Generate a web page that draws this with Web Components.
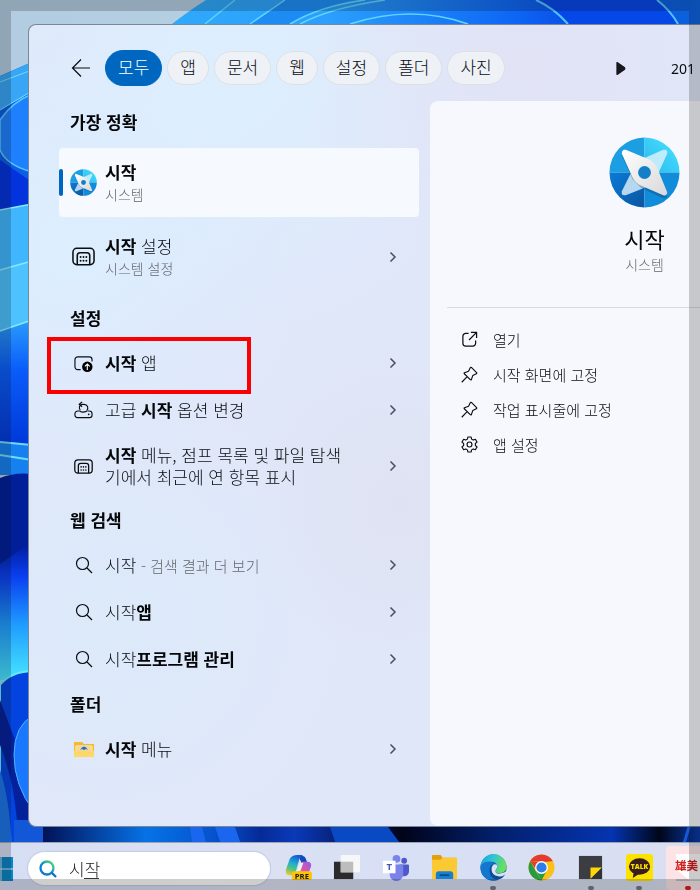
<!DOCTYPE html>
<html lang="ko">
<head>
<meta charset="utf-8">
<meta name="viewport" content="width=device-width, initial-scale=1">
<title>시작 - 검색</title>
<style>
  html, body {
    margin: 0;
    height: 100%;
    overflow: hidden;
  }
  body {
    font-family: "Noto Sans CJK KR", "Noto Sans", sans-serif;
    font-weight: 300;
    font-size: 17px;
    line-height: 22px;
    color: #0a0c10;
  }
</style>
</head>
<body>
<search-desktop>
  <search-window>
    <filter-bar slot="header">
      <filter-pill selected>모두</filter-pill>
      <filter-pill>앱</filter-pill>
      <filter-pill>문서</filter-pill>
      <filter-pill>웹</filter-pill>
      <filter-pill>설정</filter-pill>
      <filter-pill>폴더</filter-pill>
      <filter-pill>사진</filter-pill>
      <span slot="points">201</span>
    </filter-bar>

    <result-group slot="results" label="가장 정확" large>
      <result-row icon="start" size="27" active>
        <b>시작</b>
        <span slot="sub">시스템</span>
      </result-row>
      <result-row icon="taskbar" size="23" more>
        <b>시작</b> 설정
        <span slot="sub">시스템 설정</span>
      </result-row>
    </result-group>

    <result-group slot="results" label="설정">
      <result-row icon="startup" size="19" more marked><b>시작</b> 앱</result-row>
      <result-row icon="recovery" size="19" more>고급 <b>시작</b> 옵션 변경</result-row>
      <result-row icon="taskbar" size="19" more><b>시작</b> 메뉴, 점프 목록 및 파일 탐색<wbr>기에서 최근에 연 항목 표시</result-row>
    </result-group>

    <result-group slot="results" label="웹 검색">
      <result-row icon="search" size="18" more>시작 <small>- 검색 결과 더 보기</small></result-row>
      <result-row icon="search" size="18" more>시작<b>앱</b></result-row>
      <result-row icon="search" size="18" more>시작<b>프로그램 관리</b></result-row>
    </result-group>

    <result-group slot="results" label="폴더">
      <result-row icon="folder-small" size="20" more><b>시작</b> 메뉴</result-row>
    </result-group>

    <detail-pane slot="detail" name="시작" kind="시스템">
      <detail-action icon="open">열기</detail-action>
      <detail-action icon="pin">시작 화면에 고정</detail-action>
      <detail-action icon="pin">작업 표시줄에 고정</detail-action>
      <detail-action icon="gear">앱 설정</detail-action>
    </detail-pane>
  </search-window>

  <task-bar slot="taskbar" query="시작">
    <task-app icon="copilot" label="Copilot"></task-app>
    <task-app icon="taskview" label="작업 보기"></task-app>
    <task-app icon="teams" label="Teams"></task-app>
    <task-app icon="explorer" label="파일 탐색기"></task-app>
    <task-app icon="edge" label="Edge" open></task-app>
    <task-app icon="chrome" label="Chrome"></task-app>
    <task-app icon="notes" label="스티커 메모" open></task-app>
    <task-app icon="talk" label="카카오톡" open></task-app>
    <task-app icon="brush" label="캡처" alert></task-app>
  </task-bar>
</search-desktop>

<script>
const ICONS = {
  start: `<svg viewBox="0 0 72 72">
    <defs>
      <linearGradient id="q1" x1="0" y1="1" x2="1" y2="0"><stop offset="0" stop-color="#27b9ee"/><stop offset="1" stop-color="#4de3ff"/></linearGradient>
      <linearGradient id="q3" x1="0" y1="0" x2="1" y2="1"><stop offset="0" stop-color="#0a7bd8"/><stop offset="1" stop-color="#0a559f"/></linearGradient>
      <linearGradient id="bl" x1="0" y1="0" x2="1" y2="1"><stop offset="0" stop-color="#fff"/><stop offset="1" stop-color="#d8d8da"/></linearGradient>
      <clipPath id="c"><circle cx="36" cy="36" r="35.500"/></clipPath>
    </defs>
    <g clip-path="url(#c)">
      <path d="M0 0h36v36H0z" fill="#1b9fe2"/><path d="M36 0h36v36H36z" fill="url(#q1)"/>
      <path d="M0 36h36v36H0z" fill="url(#q3)"/><path d="M36 36h36v36H36z" fill="#108cdb"/>
    </g>
    <path d="M55 13q5-1 4 4L49 39 40 50 17 59q-5 1-4-4L24 33 32 23z" fill="#e0f4fd" opacity=".8"/>
    <path d="M17 15 38 23 48 32 59 57q0 4-4 3L33 50 24 41 13 17q0-4 4-2z" transform="translate(0 2)" fill="#06365f" opacity=".3"/>
    <path d="M17 13 39 22Q47 25 50 34L59 56q0 4-4 3L34 50Q26 47 23 39L13 17q0-5 4-4z" fill="url(#bl)"/>
    <circle cx="36" cy="36" r="6.500" fill="#147fc9"/>
  </svg>`,
  taskbar: `<svg viewBox="0 0 24 24" fill="none" stroke="currentColor" stroke-width="1.600">
    <rect x="1" y="3.500" width="22" height="17" rx="4"/><path d="M5.500 20.500V11a3 3 0 0 1 3-3h7a3 3 0 0 1 3 3v9.500"/>
    <g fill="currentColor" stroke="none"><circle cx="9" cy="12.500" r="1"/><circle cx="12" cy="12.500" r="1"/><circle cx="15" cy="12.500" r="1"/><circle cx="9" cy="16.500" r="1"/><circle cx="12" cy="16.500" r="1"/><circle cx="15" cy="16.500" r="1"/></g>
  </svg>`,
  startup: `<svg viewBox="0 0 20 20" fill="none" stroke="currentColor" stroke-width="1.200">
    <path d="M7 16.500H4a3 3 0 0 1-3-3V6a3 3 0 0 1 3-3h12a3 3 0 0 1 3 3v2"/>
    <circle cx="14" cy="13.500" r="5.500" fill="#000" stroke="none"/><path d="M14 16.800v-6M11.500 13l2.500-2.500 2.500 2.500" stroke="#fff"/>
  </svg>`,
  recovery: `<svg viewBox="0 0 20 20" fill="none" stroke="currentColor" stroke-width="1.200">
    <path d="M6 10.500H4a3 3 0 0 0-3 3V15a2.500 2.500 0 0 0 2.500 2.500h13A2.500 2.500 0 0 0 19 15v-1.500a3 3 0 0 0-3-3h-1.500M6 10.500q2 2.500 8 0M6.500 9.500C4.500 7 6 3.500 9 3.500h1.500c4 0 5 4 3 6.500M8.500 1 5.500 3.500l3 2.500"/>
    <circle cx="15.500" cy="14" r=".9" fill="currentColor" stroke="none"/>
  </svg>`,
  search: `<svg viewBox="0 0 18 18" fill="none" stroke="currentColor" stroke-width="1.200"><circle cx="7.500" cy="7.500" r="6"/><path d="m12 12 5 5"/></svg>`,
  'folder-small': `<svg viewBox="0 0 20 20">
    <path d="M0 3h8l2 2h10v12H0z" fill="#f5b92a"/><path d="M2 6h16v6H2z" fill="#e6d9b4"/>
    <path d="M0 12h7q3-3 6 0h7v6H0z" fill="#ffd766"/><path d="M1 7h5v6H1zM14 7h5v6h-5z" fill="#fcd88a"/>
    <path d="M6 11q4-7 8 0l-2-1-2 1-2-1z" fill="#1a73c7"/>
  </svg>`,
  open: `<svg viewBox="0 0 18 18" fill="none" stroke="currentColor" stroke-width="1.300"><path d="M8 2.500H5A3 3 0 0 0 2 5.500V13a3 3 0 0 0 3 3h7.500a3 3 0 0 0 3-3v-3M10.500 1.500h6v6M16.500 1.500 8.500 9.500"/></svg>`,
  pin: `<svg viewBox="0 0 18 18" fill="none" stroke="currentColor" stroke-width="1.200" stroke-linejoin="round"><path d="m11 1.500 5.500 5.500q.5.800-.3 1.200L12.500 10 11 14.500q-.5.700-1.200 0L3.500 8.200q-.6-.7.200-1.100L8 5.500l1.800-3.700q.5-.8 1.200-.3zM6.500 11.300.8 17.200"/></svg>`,
  gear: `<svg viewBox="0 0 18 18" fill="none" stroke="currentColor" stroke-width="1.200" stroke-linejoin="round">
    <path d="M7.300 1h3.400l.5 2.300 1.700 1 2.300-.8L17 6.500 15.200 8v2L17 11.500l-1.800 3-2.300-.8-1.700 1-.5 2.300H7.300l-.5-2.300-1.700-1-2.300.8-1.800-3L2.800 10V8L1 6.500l1.800-3 2.300.8 1.700-1z"/><circle cx="9" cy="9" r="2.600"/>
  </svg>`,
  chevron: `<svg viewBox="0 0 10 12" fill="none" stroke="#4c5058" stroke-width="1.500"><path d="m2.500 1.500 4.500 4.500-4.500 4.500"/></svg>`,
  back: `<svg viewBox="0 0 20 20" fill="none" stroke="currentColor" stroke-width="1.200"><path d="M19 10H1.500M10 1.500 1.500 10l8.500 8.500"/></svg>`,
  bing: `<svg viewBox="0 0 18 18" fill="none" stroke-width="2.300">
    <defs><linearGradient id="g" x1="0" y1="1" x2="1" y2="0"><stop offset=".3" stop-color="#0f7bd0"/><stop offset=".6" stop-color="#16a6b8"/><stop offset="1" stop-color="#6adf6a"/></linearGradient></defs>
    <circle cx="8" cy="8" r="6.500" stroke="url(#g)"/><path d="m12.500 12.500 4.500 4.500" stroke="#0f6fc6"/>
  </svg>`,
  windows: `<svg viewBox="0 0 24 24" fill="#0b84c4"><path d="M0 0h11.500v11.500H0zM12.500 0H24v11.500H12.500zM0 12.500h11.500V24H0zM12.500 12.500H24V24H12.500z"/></svg>`,
  copilot: `<svg viewBox="0 0 28 28">
    <defs>
      <linearGradient id="a" x1=".6" y1="0" x2=".3" y2="1"><stop offset="0" stop-color="#1456d8"/><stop offset=".45" stop-color="#1fb3cf"/><stop offset=".7" stop-color="#55c27a"/><stop offset="1" stop-color="#e8c93a"/></linearGradient>
      <linearGradient id="b" x1="0" y1="1" x2="1" y2="0"><stop offset="0" stop-color="#ff8d55"/><stop offset=".5" stop-color="#e0569d"/><stop offset="1" stop-color="#8f5cf4"/></linearGradient>
    </defs>
    <path d="M14 2h4q3 0 4 4l1 3h-6z" fill="#1149b8"/>
    <path d="M18 8h5q5 0 4 5l-3 8q-1 3-5 3H9q3 0 4-3l3-10q1-3 2-3z" fill="url(#b)"/>
    <path d="M8 2q2-1 5-1h6q-3 1-4 4l-4 14q-1 3-4 3H4q-4 0-3-6L5 5q1-2 3-3z" fill="url(#a)"/>
    <path d="M16 9h3l-3 9h-4z" fill="#eaf0fa"/>
    <rect x="7" y="18" width="21" height="9" rx="3" fill="#f9c60c"/>
    <text x="17.500" y="25.500" font-family="Open Sans" font-size="8" font-weight="700" text-anchor="middle" fill="#241a00">PRE</text>
  </svg>`,
  taskview: `<svg viewBox="0 0 28 28"><path d="M1 8h20v18H1z" fill="#2b2b2b"/><path d="M8 1h20v18H8z" fill="#f7f7f7"/><path d="M8 8h13v11H8z" fill="#bdbdbd"/></svg>`,
  teams: `<svg viewBox="0 0 28 28">
    <circle cx="23" cy="7" r="3" fill="#5059c9"/><path d="M18 11h9q1 0 1 1v6a5 5 0 0 1-9 3z" fill="#5059c9"/>
    <circle cx="15" cy="5" r="4" fill="#7b83eb"/><path d="M8 11h14v9a7 7 0 0 1-14 2z" fill="#7b83eb"/>
    <rect x="1" y="7" width="13" height="13" fill="#fff"/><text x="7.500" y="17" font-family="Open Sans" font-size="10" font-weight="700" text-anchor="middle" fill="#4b53bc">T</text>
  </svg>`,
  explorer: `<svg viewBox="0 0 28 28"><path d="M1 2q0-1 1-1h8l2 3h13q2 0 2 2v5H1z" fill="#e3a008"/><path d="M1 6h9l2-2h15v22H1z" fill="#fbc934"/><path d="M5 26v-5q0-3 3-3h12q3 0 3 3v5z" fill="#1681d2"/><path d="M9 22h10" stroke="#0a4e8d" stroke-width="2"/></svg>`,
  edge: `<svg viewBox="0 0 28 28">
    <defs><linearGradient id="e" x1="0" y1="0" x2="1" y2=".3"><stop offset="0" stop-color="#1b9de2"/><stop offset=".5" stop-color="#2fc4d6"/><stop offset="1" stop-color="#6ade5d"/></linearGradient></defs>
    <circle cx="14" cy="14" r="13.500" fill="#0f5bb0"/>
    <path d="M.5 14A13.500 13.500 0 0 1 27.500 13c0 5-4 7-7.500 7-3 0-4-1-4-2 0-2 2-2 2-5 0-3-3-5-7-5C6 8 1 10 .5 14z" fill="url(#e)"/>
    <path d="M.5 14C1 10 5 8 9 8q4 0 6 2-5 1-5 7c0 5 4 9 9 10C9 30 .5 24 .5 14z" fill="#1476cf"/>
    <path d="M14 10q-4 3-2 8 3 5 9 5 3 0 5-2-2 4-6 5-10 1-10-9 0-5 4-7z" fill="#0c4a93"/>
    <path d="M14 11q4-1 4 2c0 2-2 3-2 5 0 2 3 3 6 2 2 0 4-1 5-2l1 1-2 2q-3 3-7 2-7-1-7-7 0-3 2-5z" fill="#dbe2f4"/>
  </svg>`,
  chrome: `<svg viewBox="0 0 28 28"><circle cx="14" cy="14" r="13.500" fill="#fbc116"/>
    <path d="M2.300 7.300A13.500 13.500 0 0 1 25.700 7.300L14 8z" fill="#e33b2e"/><path d="M2.300 7.300 8 18l6 9.500A13.500 13.500 0 0 1 2.300 7.300z" fill="#259b45"/>
    <path d="M2.300 7.300 9 8h17l-12-1-6 9z" fill="#e33b2e"/><path d="m8 17 6 3 5-2-5 9.500z" fill="#259b45"/>
    <circle cx="14" cy="14" r="6.700" fill="#fff"/><circle cx="14" cy="14" r="5.300" fill="#2f7de9"/></svg>`,
  notes: `<svg viewBox="0 0 28 28"><path d="M2 2h24v24H2z" fill="#3b3d40"/><path d="M14 26V14h12z" fill="#ffd60a"/><path d="M14 26h12V14z" fill="#303235"/></svg>`,
  talk: `<svg viewBox="0 0 28 28"><rect width="28" height="28" rx="3" fill="#fbe300"/><ellipse cx="14" cy="13" rx="11" ry="8.500" fill="#3a1d1d"/><path d="m8 19-1 6 6-4z" fill="#3a1d1d"/>
    <text x="14" y="15.500" font-family="Open Sans" font-size="7" font-weight="800" text-anchor="middle" fill="#fbe300">TALK</text></svg>`,
  brush: `<svg viewBox="0 0 28 28"><path d="M1 0h27v28H16L1 16z" fill="#fdfdfd"/><path d="M1 27h27" stroke="#8b98a8"/>
    <text x="0" y="17" font-family="Noto Sans CJK KR" font-size="12" font-weight="700" fill="#d0201c">雄美</text></svg>`
};

class FluentIcon extends HTMLElement {
  constructor() {
    super();
    this.attachShadow({ mode: 'open' });
  }

  connectedCallback() {
    const size = this.getAttribute('size') || 18;
    this.shadowRoot.innerHTML = `
      <style>
        :host { display: inline-flex; flex: none; width: ${size}px; height: ${size}px; }
        svg { width: 100%; height: 100%; overflow: visible; }
      </style>
      ${ICONS[this.getAttribute('name')]}
    `;
  }
}
customElements.define('fluent-icon', FluentIcon);

class DesktopWallpaper extends HTMLElement {
  constructor() {
    super();
    this.attachShadow({ mode: 'open' });
    this.shadowRoot.innerHTML = `
      <style>
        :host { position: fixed; inset: 0; z-index: -1; }
        svg { display: block; width: 100%; height: 100%; }
      </style>
      <svg viewBox="0 0 700 890" preserveAspectRatio="none">
        <defs>
          <linearGradient id="sky" x1="0" y1="0" x2="1" y2="0"><stop offset="0" stop-color="#b2cde2"/><stop offset="1" stop-color="#b8cfe0"/></linearGradient>
          <linearGradient id="top" x1="0" y1="0" x2="1" y2="0"><stop offset="0" stop-color="#2fa9fb"/><stop offset=".3" stop-color="#2a9ffc"/><stop offset=".65" stop-color="#0d66f5"/><stop offset=".75" stop-color="#0a50e8"/><stop offset="1" stop-color="#0c62dc"/></linearGradient>
          <linearGradient id="mid" x1="0" y1="0" x2="0" y2="1"><stop offset="0" stop-color="#2a9cfb"/><stop offset=".4" stop-color="#0a5cfa"/><stop offset="1" stop-color="#0038d8"/></linearGradient>
          <linearGradient id="deep" x1="0" y1="0" x2="0" y2="1"><stop offset="0" stop-color="#001a98"/><stop offset=".25" stop-color="#0a3ff0"/><stop offset=".6" stop-color="#1f9cff"/><stop offset="1" stop-color="#48e6ff"/></linearGradient>
          <linearGradient id="bot" x1="0" y1="0" x2="1" y2="0"><stop offset=".02" stop-color="#020c50"/><stop offset=".18" stop-color="#0672e6"/><stop offset=".28" stop-color="#0553cc"/><stop offset=".35" stop-color="#062a98"/><stop offset=".4" stop-color="#0a3ab8"/><stop offset=".48" stop-color="#061a6a"/><stop offset=".56" stop-color="#01041a"/><stop offset=".7" stop-color="#03206e"/><stop offset=".87" stop-color="#0434b0"/><stop offset=".94" stop-color="#010618"/><stop offset="1" stop-color="#0838a8"/></linearGradient>
        </defs>
        <path d="M0 0h700v890H0z" fill="url(#sky)"/>
        <path d="M172 24Q190 10 206 0H700V40H172z" fill="url(#top)"/>
        <path d="M250 24 285 0h70q-40 8-65 24z" fill="#1c8cf4"/>
        <path d="M205 24 235 0M250 24 285 0M290 24Q320 6 365 0M300 24Q330 8 385 0M350 24Q412 4 468 24" fill="none" stroke="#5fd4ff" stroke-width="1.500"/>
        <path d="M536 0q18 8 32 24h110Q670 10 657 0z" fill="#0647e8"/>
        <path d="M536 0q18 8 32 24M657 0q13 10 21 24" fill="none" stroke="#4fc4ff" stroke-width="2"/>
        <path d="M0 76 32 62V215H0z" fill="#0b5ce6"/>
        <path d="M0 76 32 62V92L0 110z" fill="#38a6f5"/>
        <path d="M0 82 32 70M0 110 32 91" stroke="#6fdcff"/>
        <path d="M0 120Q12 102 32 94V172Q6 165 0 150z" fill="#1f80ff" stroke="#58c8ff" stroke-width="1.500"/>
        <path d="M0 160 32 182V206L0 210z" fill="#0333dc"/>
        <path d="M0 210 32 204V262L0 270z" fill="#40b6ff"/>
        <path d="M0 270 32 261V320L0 331z" fill="#4dc2ff"/>
        <path d="M0 331 32 320V445H0z" fill="url(#mid)"/>
        <path d="M0 210 32 204M0 270 32 261M0 331 32 320" stroke="#86ebff" stroke-width="1.500"/>
        <path d="M0 442 32 445V475H0z" fill="#1680f0"/>
        <path d="M0 442 32 445M0 455 32 460" stroke="#6fdcff" stroke-width="2"/>
        <path d="M0 478Q15 472 32 474V550L0 565z" fill="#001f98"/>
        <path d="M0 564 32 542V680H0z" fill="url(#deep)"/>
        <path d="M0 685Q10 672 32 671V850H0z" fill="#0344e0" stroke="#68e8ff" stroke-width="2"/>
        <path d="M0 745Q18 790 18 850H50L28 800Q14 770 15 740L0 700z" fill="#04209a"/>
        <path d="M34 715Q14 725 14 755T34 812z" fill="#1a78ff" stroke="#4db4ff"/>
        <path d="M0 770Q10 800 12 850H0z" fill="#1c74e8"/>
        <path d="M24 820H700V850H24z" fill="url(#bot)"/>
        <path d="M14 820h29v30H14z" fill="#1257d8"/>
        <path d="M190 827h12l6 23h-15zM215 827h20l8 23h-20z" fill="#1b66ee"/>
        <path d="M330 827h58l17 23h-67z" fill="#0a49c4"/>
        <path d="M690 824 682 850" stroke="#1558d8" stroke-width="3"/>
      </svg>
    `;
  }
}
customElements.define('desktop-wallpaper', DesktopWallpaper);

class SearchDesktop extends HTMLElement {
  constructor() {
    super();
    this.attachShadow({ mode: 'open' });
    this.shadowRoot.innerHTML = `
      <style>
        :host { display: flex; flex-direction: column; height: 100vh; overflow: hidden; }
        main { flex: 1; min-height: 0; display: flex; padding: 24px 0 15px 28px; }
        ::slotted(search-window) { flex: 1; min-width: 0; }
        /* translucent edge drawn over everything */
        .edge { position: fixed; inset: 0; border: 11px solid rgba(10, 10, 10, .2); pointer-events: none; z-index: 5; }
      </style>
      <desktop-wallpaper></desktop-wallpaper>
      <main><slot></slot></main>
      <slot name="taskbar"></slot>
      <div class="edge"></div>
    `;
  }
}
customElements.define('search-desktop', SearchDesktop);

class SearchWindow extends HTMLElement {
  constructor() {
    super();
    this.attachShadow({ mode: 'open' });
    this.shadowRoot.innerHTML = `
      <style>
        :host {
          display: flex;
          flex-direction: column;
          box-sizing: border-box;
          overflow: hidden;
          border: 1px solid #7d8794;
          border-right: 0;
          border-radius: 8px 0 0 8px;
          background:
            radial-gradient(circle at 75% 5%, #e1e3f5 0, transparent 25%),
            radial-gradient(circle at 30% 5%, #dceffe 0, transparent 30%),
            radial-gradient(circle at 6% 28%, #dceefe 0, transparent 28%),
            radial-gradient(circle at 12% 74%, #dceafa 0, transparent 28%),
            radial-gradient(circle at 55% 60%, #dfe2f2 0, transparent 25%),
            #e0e7f9;
        }
        .body { flex: 1; min-height: 0; display: flex; }
        .results { flex: none; width: 360px; padding: 0 11px 0 30px; }
        ::slotted(detail-pane) { flex: none; }
      </style>
      <slot name="header"></slot>
      <div class="body">
        <div class="results"><slot name="results"></slot></div>
        <slot name="detail"></slot>
      </div>
    `;
  }
}
customElements.define('search-window', SearchWindow);

class FilterBar extends HTMLElement {
  constructor() {
    super();
    this.attachShadow({ mode: 'open' });
    this.shadowRoot.innerHTML = `
      <style>
        :host { display: flex; align-items: center; height: 36px; padding: 25px 5px 15px 42px; }
        button { border: 0; background: none; padding: 0; display: flex; color: inherit; }
        nav { display: flex; align-items: center; gap: 5px; margin-left: 14px; }
        .next { margin-left: auto; margin-right: 45px; }
        .next svg { width: 10px; height: 13px; }
        .points { font: 14px "Noto Sans", sans-serif; }
      </style>
      <button aria-label="뒤로"><fluent-icon name="back" size="20"></fluent-icon></button>
      <nav><slot></slot></nav>
      <button class="next" aria-label="다음"><svg viewBox="0 0 10 14"><path d="M0 1q0-2 2-.5l7 5q1.500 1.500 0 3l-7 5q-2 1.500-2-.5z" fill="#16181c"/></svg></button>
      <div class="points"><slot name="points"></slot></div>
    `;
  }
}
customElements.define('filter-bar', FilterBar);

class FilterPill extends HTMLElement {
  constructor() {
    super();
    this.attachShadow({ mode: 'open' });
    this.shadowRoot.innerHTML = `
      <style>
        :host { display: block; }
        button {
          font: inherit;
          color: inherit;
          height: 34px;
          padding: 0 12px 2px;
          border: 1px solid #dfe0e4;
          border-radius: 17px;
          background: #eef1f6;
          white-space: nowrap;
        }
        :host([selected]) button { height: 36px; border-color: #0067c0; border-radius: 18px; background: #0067c0; color: #fff; }
      </style>
      <button><slot></slot></button>
    `;
  }
}
customElements.define('filter-pill', FilterPill);

class ResultGroup extends HTMLElement {
  constructor() {
    super();
    this.attachShadow({ mode: 'open' });
  }

  connectedCallback() {
    this.shadowRoot.innerHTML = `
      <style>
        :host { display: flex; flex-direction: column; gap: 1px; margin-bottom: 1px; }
        :host([large]) { --row-height: 69px; gap: 5px; margin-bottom: 6px; }
        h2 { margin: 0; padding: 0 11px; font-size: 17px; line-height: 42px; font-weight: 700; color: #050608; }
      </style>
      <h2>${this.getAttribute('label')}</h2>
      <slot></slot>
    `;
  }
}
customElements.define('result-group', ResultGroup);

class ResultRow extends HTMLElement {
  constructor() {
    super();
    this.attachShadow({ mode: 'open' });
  }

  connectedCallback() {
    const more = this.hasAttribute('more') ? '<fluent-icon name="chevron" size="12"></fluent-icon>' : '';
    this.shadowRoot.innerHTML = `
      <style>
        :host { display: block; position: relative; }
        button {
          display: flex;
          align-items: center;
          box-sizing: border-box;
          width: 100%;
          min-height: var(--row-height, 46px);
          padding: 10px 20px 10px 11px;
          border: 0;
          border-radius: 4px;
          background: none;
          font: inherit;
          color: inherit;
          text-align: left;
        }
        :host([active]) button { background: #f6f9fe; }
        :host([active])::before {
          content: "";
          position: absolute;
          left: 0;
          top: 21px;
          width: 4px;
          height: 27px;
          border-radius: 2px;
          background: #0067c0;
        }
        .icon { display: flex; justify-content: center; width: 27px; margin-right: 8px; flex: none; }
        .text { flex: 1; }
        .label { max-width: 240px; }
        ::slotted(b) { font-weight: 700; color: #050608; }
        ::slotted(small) { font-size: 15px; color: #63676e; }
        ::slotted([slot="sub"]) { display: block; font-size: 14px; color: #63676e; }
        /* red callout around a row */
        .mark { position: absolute; inset: -3px 168px -8px -12px; border: 4px solid #fb0000; pointer-events: none; }
      </style>
      <button>
        <span class="icon"><fluent-icon name="${this.getAttribute('icon')}" size="${this.getAttribute('size')}"></fluent-icon></span>
        <div class="text"><div class="label"><slot></slot></div><slot name="sub"></slot></div>
        ${more}
      </button>
      ${this.hasAttribute('marked') ? '<div class="mark"></div>' : ''}
    `;
  }
}
customElements.define('result-row', ResultRow);

class DetailPane extends HTMLElement {
  constructor() {
    super();
    this.attachShadow({ mode: 'open' });
  }

  connectedCallback() {
    this.shadowRoot.innerHTML = `
      <style>
        :host {
          display: flex;
          flex-direction: column;
          align-items: center;
          box-sizing: border-box;
          width: 429px;
          padding: 36px 17px 0;
          border-radius: 8px 0 0 8px;
          background: #f6f8fd;
        }
        h1 { margin: 15px 0 0; font-size: 22px; line-height: 30px; font-weight: 400; color: #050608; }
        p { margin: 0; font-size: 14px; line-height: 22px; color: #63676e; }
        .actions { align-self: stretch; margin-top: 32px; padding: 14px; border-top: 1px solid #d9dbe0; }
      </style>
      <fluent-icon name="start" size="71"></fluent-icon>
      <h1>${this.getAttribute('name')}</h1>
      <p>${this.getAttribute('kind')}</p>
      <div class="actions"><slot></slot></div>
    `;
  }
}
customElements.define('detail-pane', DetailPane);

class DetailAction extends HTMLElement {
  constructor() {
    super();
    this.attachShadow({ mode: 'open' });
  }

  connectedCallback() {
    this.shadowRoot.innerHTML = `
      <style>
        :host { display: block; }
        button {
          display: flex;
          align-items: center;
          gap: 15px;
          width: 100%;
          height: 35px;
          padding: 0;
          border: 0;
          background: none;
          font: inherit;
          font-size: 15px;
          color: inherit;
        }
      </style>
      <button><fluent-icon name="${this.getAttribute('icon')}" size="17"></fluent-icon><slot></slot></button>
    `;
  }
}
customElements.define('detail-action', DetailAction);

class TaskBar extends HTMLElement {
  constructor() {
    super();
    this.attachShadow({ mode: 'open' });
  }

  connectedCallback() {
    this.shadowRoot.innerHTML = `
      <style>
        :host {
          display: flex;
          align-items: center;
          box-sizing: border-box;
          height: 48px;
          overflow: hidden;
          border-top: 1px solid #9aa3b8;
          background: linear-gradient(90deg, #d6def3, #dbe0f3 40%, #d8e0f6 60%, #dadff0);
        }
        .start { margin: 4px 15px 0 -11px; padding: 0; border: 0; background: none; display: flex; }
        .search {
          position: relative;
          display: flex;
          align-items: center;
          gap: 12px;
          flex: none;
          box-sizing: border-box;
          width: 242px;
          height: 33px;
          margin-top: 4px;
          padding: 0 11px;
          border-radius: 17px;
          background: #fff;
          box-shadow: 0 0 1px 1px #c3cbe0;
        }
        input { flex: 1; min-width: 0; border: 0; padding: 0; outline: 0; background: none; font: inherit; color: #1b1d21; }
        /* underline of the syllable still being composed */
        .compose { position: absolute; left: 56px; bottom: 6px; width: 15px; height: 1px; background: #333; }
        .apps { flex: 1; display: flex; justify-content: space-between; align-self: stretch; margin: 3px -10px 0 6px; }
      </style>
      <button class="start" aria-label="시작"><fluent-icon name="windows" size="24"></fluent-icon></button>
      <label class="search">
        <fluent-icon name="bing" size="18"></fluent-icon>
        <input type="text" aria-label="검색" value="${this.getAttribute('query')}">
        <span class="compose"></span>
      </label>
      <div class="apps"><slot></slot></div>
    `;
  }
}
customElements.define('task-bar', TaskBar);

class TaskApp extends HTMLElement {
  constructor() {
    super();
    this.attachShadow({ mode: 'open' });
  }

  connectedCallback() {
    this.shadowRoot.innerHTML = `
      <style>
        :host { display: flex; flex: none; width: 44px; }
        button {
          display: flex;
          flex-direction: column;
          align-items: center;
          gap: 5px;
          width: 100%;
          padding: 8px 0 0;
          border: 0;
          border-radius: 4px;
          background: none;
        }
        :host([alert]) button { background: #fbe3e6; }
        i { width: 6px; height: 4px; border-radius: 2px; }
        :host([open]) i { background: #747a86; }
        :host([alert]) i { background: #d0201c; }
      </style>
      <button aria-label="${this.getAttribute('label')}"><fluent-icon name="${this.getAttribute('icon')}" size="27"></fluent-icon><i></i></button>
    `;
  }
}
customElements.define('task-app', TaskApp);
</script>
</body>
</html>
